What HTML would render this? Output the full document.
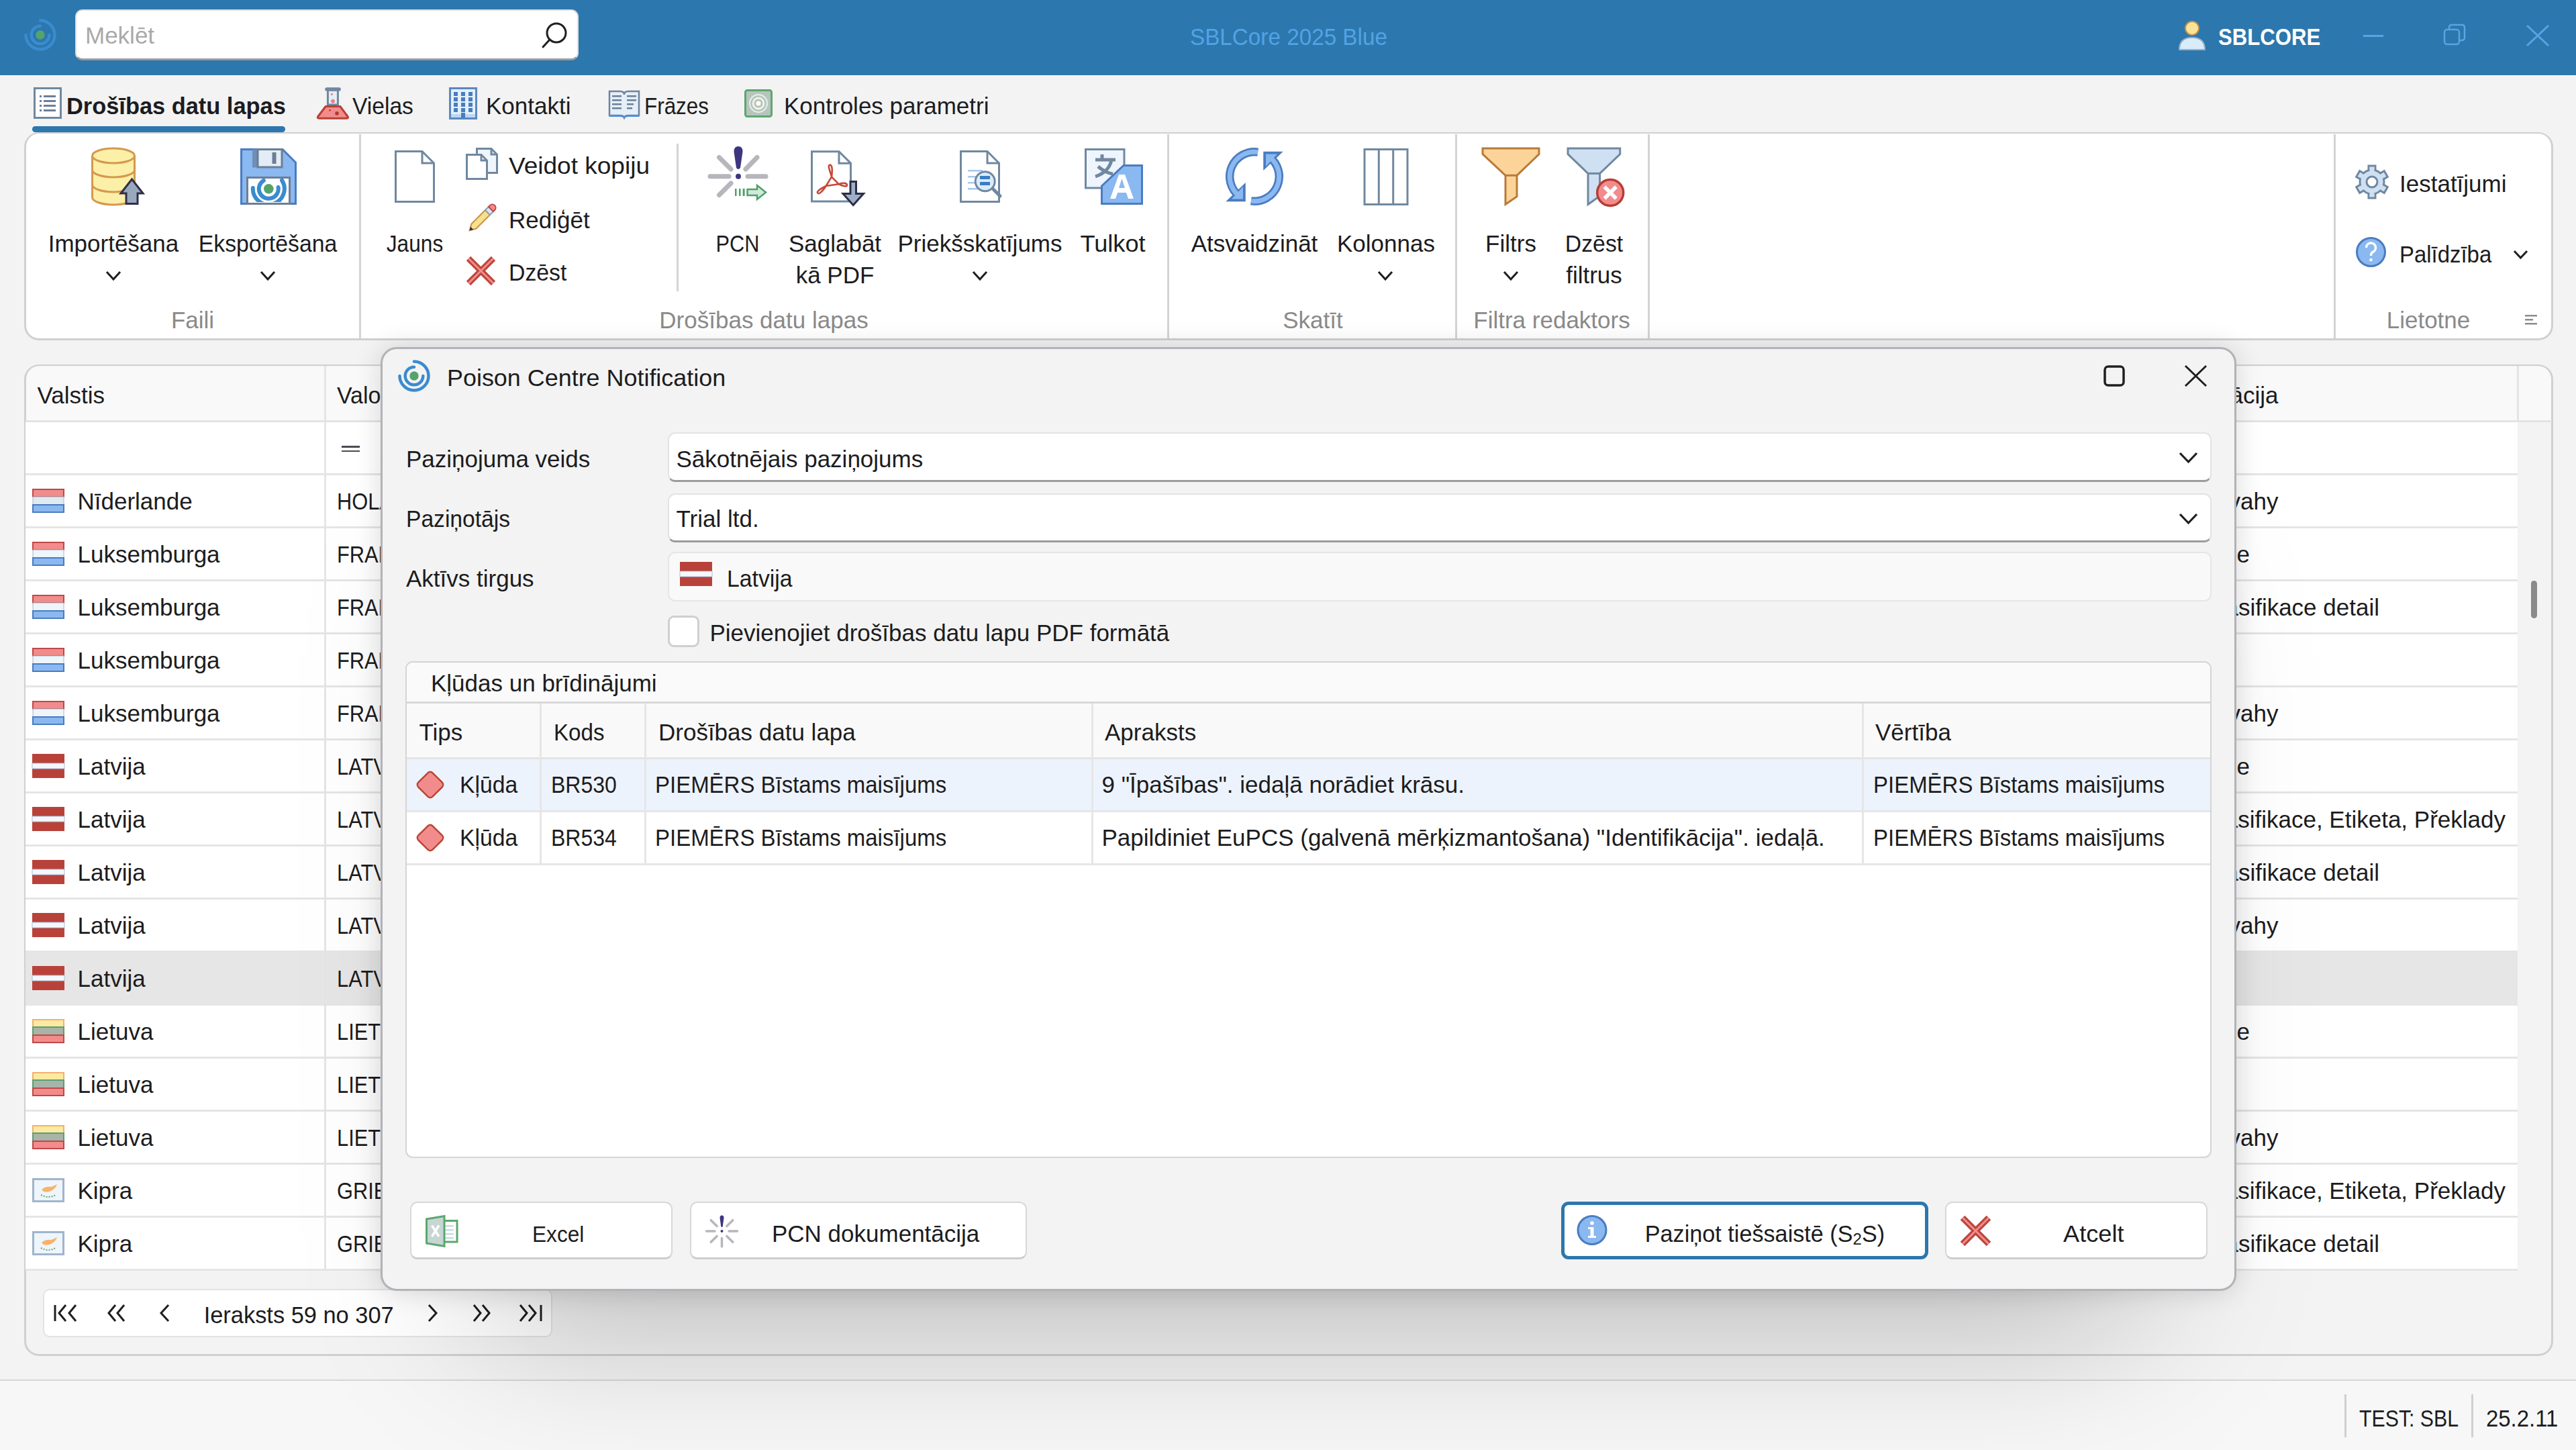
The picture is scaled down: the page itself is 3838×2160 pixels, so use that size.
<!DOCTYPE html>
<html><head><meta charset="utf-8"><style>
html,body{margin:0;padding:0;}
body{width:3838px;height:2160px;position:relative;overflow:hidden;background:#f3f3f3;font-family:"Liberation Sans",sans-serif;color:#1c1c20;}
.a{position:absolute;}
.t{position:absolute;white-space:nowrap;line-height:1;}
svg{overflow:visible}
</style></head><body>
<div class="a" style="left:0px;top:0px;width:3838px;height:112px;background:#2c77ad"></div><svg class="a" style="left:34.0px;top:26.0px" width="52.0" height="52.0" viewBox="0 0 52.0 52.0"><g transform="translate(26.0,26.0)" fill="none" stroke="#3a8bd0" stroke-width="4.5" stroke-linecap="round"><path d="M 0 -21.50 A 21.5 21.5 0 1 1 -21.50 0"/><path d="M 0 -13.30 A 13.3 13.3 0 1 0 13.30 0"/></g><circle cx="26.0" cy="26.0" r="6.7" fill="#55a36c"/></svg><div class="a" style="left:112px;top:14px;width:750px;height:76px;background:#fff;border:2px solid #dedede;border-bottom:3px solid #9c9c9c;border-radius:11px;box-sizing:border-box"></div><div class="t" style="left:127px;top:35.4px;font-size:35px;color:#a9a9a9;">Meklēt</div><svg class="a" style="left:800px;top:30px" width="46" height="46" viewBox="0 0 46 46"><circle cx="29" cy="19" r="14" fill="none" stroke="#1f1f1f" stroke-width="3"/><line x1="19" y1="29" x2="9" y2="40" stroke="#1f1f1f" stroke-width="3" stroke-linecap="round"/></svg><div class="t" style="left:1773px;top:37.4px;font-size:35px;transform:scaleX(0.95);transform-origin:0 0;color:#52a3e5;">SBLCore 2025 Blue</div><svg class="a" style="left:3245px;top:30px" width="42" height="46" viewBox="0 0 42 46"><circle cx="21" cy="12" r="10" fill="#fbe49a" stroke="#c8914a" stroke-width="2"/><path d="M2 44 Q2 26 21 26 Q40 26 40 44 Z" fill="#d8ecfa" stroke="#9ab0c8" stroke-width="2"/></svg><div class="t" style="left:3305px;top:37.4px;font-size:35px;transform:scaleX(0.89);transform-origin:0 0;color:#ffffff;font-weight:700;">SBLCORE</div><div class="a" style="left:3521px;top:52px;width:30px;height:3px;background:#5aa3e4"></div><svg class="a" style="left:3640px;top:35px" width="36" height="36" viewBox="0 0 36 36"><rect x="2" y="9" width="22" height="22" rx="4" fill="none" stroke="#5aa3e4" stroke-width="2.5"/><path d="M9 9 V6 Q9 2 13 2 H28 Q32 2 32 6 V21 Q32 25 28 25 H24" fill="none" stroke="#5aa3e4" stroke-width="2.5"/></svg><svg class="a" style="left:3764px;top:37px" width="34" height="32" viewBox="0 0 34 32"><path d="M1 1 L33 31 M33 1 L1 31" stroke="#5aa3e4" stroke-width="3"/></svg><svg class="a" style="left:50px;top:130px" width="42" height="47" viewBox="0 0 42 47"><rect x="1.5" y="1.5" width="39" height="44" fill="#fff" stroke="#7088a0" stroke-width="3"/><g fill="#6c7f96"><rect x="9" y="12" width="3" height="3"/><rect x="9" y="19" width="3" height="3"/><rect x="9" y="26" width="3" height="3"/><rect x="9" y="33" width="3" height="3"/><rect x="15" y="12" width="18" height="3"/><rect x="15" y="19" width="18" height="3"/><rect x="15" y="26" width="18" height="3"/><rect x="15" y="33" width="18" height="3"/></g></svg><div class="t" style="left:99px;top:140.9px;font-size:34.4px;font-weight:700;">Drošības datu lapas</div><div class="a" style="left:48px;top:188px;width:377px;height:9px;background:#2c77ad;border-radius:5px"></div><svg class="a" style="left:472px;top:130px" width="48" height="48" viewBox="0 0 48 48"><rect x="16.4" y="4" width="15" height="22" fill="#e4eef6" stroke="#7088a0" stroke-width="3"/><rect x="12.2" y="0.3" width="23.6" height="5.5" rx="2.7" fill="#7088a0"/><path d="M13.2 28.5 H34.8 L46 43.5 Q47.5 46.3 44.5 46.3 H3.3 Q0.3 46.3 1.8 43.5 Z" fill="#f28c8c" stroke="#b84035" stroke-width="3" stroke-linejoin="round"/><circle cx="22.4" cy="10.3" r="1.6" fill="#f08080"/><circle cx="24" cy="20.7" r="3" fill="#f08080"/><circle cx="19.5" cy="34.3" r="1.4" fill="#b03a30"/><circle cx="30" cy="38.9" r="2.8" fill="#b03a30"/></svg><div class="t" style="left:525px;top:140.4px;font-size:35px;transform:scaleX(0.96);transform-origin:0 0;">Vielas</div><svg class="a" style="left:669px;top:130px" width="42" height="48" viewBox="0 0 42 48"><rect x="1.5" y="1.5" width="39" height="45" fill="#e3f0fb" stroke="#5a88c0" stroke-width="3"/><g fill="#4a7cc0"><rect x="7" y="7" width="6" height="6"/><rect x="18" y="7" width="6" height="6"/><rect x="29" y="7" width="6" height="6"/><rect x="7" y="15" width="6" height="6"/><rect x="18" y="15" width="6" height="6"/><rect x="29" y="15" width="6" height="6"/><rect x="7" y="23" width="6" height="6"/><rect x="18" y="23" width="6" height="6"/><rect x="29" y="23" width="6" height="6"/><rect x="7" y="31" width="6" height="6"/><rect x="18" y="31" width="6" height="6"/><rect x="29" y="31" width="6" height="6"/><rect x="18" y="38" width="6" height="8"/></g><rect x="3" y="40" width="36" height="5" fill="#a9cdf0" opacity=".7"/><rect x="18" y="38" width="6" height="8" fill="#4a7cc0"/></svg><div class="t" style="left:724px;top:140.4px;font-size:35px;">Kontakti</div><svg class="a" style="left:906px;top:133px" width="48" height="44" viewBox="0 0 48 44"><path d="M2 3 H18 Q24 3 24 8 Q24 3 30 3 H46 V39 H30 Q25 39 24 42 Q23 39 18 39 H2 Z" fill="#e6eff7" stroke="#6e84a0" stroke-width="2.5"/><path d="M2 38 H18 Q23 38 24 42 Q25 38 30 38 H46 V41 H30 Q26 41 24 44 Q22 41 18 41 H2 Z" fill="#4f8fd8"/><g fill="#6c7f96"><rect x="6" y="9" width="14" height="2.5"/><rect x="6" y="15" width="14" height="2.5"/><rect x="6" y="21" width="14" height="2.5"/><rect x="6" y="27" width="14" height="2.5"/><rect x="28" y="9" width="14" height="2.5"/><rect x="28" y="15" width="14" height="2.5"/><rect x="28" y="21" width="10" height="2.5"/><rect x="28" y="27" width="8" height="2.5"/></g></svg><div class="t" style="left:960px;top:140.4px;font-size:35px;transform:scaleX(0.897);transform-origin:0 0;">Frāzes</div><svg class="a" style="left:1109px;top:133px" width="42" height="42" viewBox="0 0 42 42"><rect x="1.5" y="1.5" width="39" height="39" rx="3" fill="#b9c4bc" stroke="#5ba86e" stroke-width="3"/><circle cx="21" cy="21" r="13" fill="none" stroke="#dff3ee" stroke-width="2"/><circle cx="21" cy="21" r="8" fill="none" stroke="#f4f9e8" stroke-width="2.5"/><circle cx="21" cy="21" r="3.5" fill="#fff"/></svg><div class="t" style="left:1168px;top:140.4px;font-size:35px;">Kontroles parametri</div><div class="a" style="left:36px;top:197px;width:3768px;height:310px;background:#fff;border:3px solid #d0d0d0;border-top-width:2.5px;border-radius:22px;box-sizing:border-box"></div><div class="a" style="left:535px;top:200px;width:3px;height:304px;background:#d4d4d4"></div><div class="a" style="left:1739px;top:200px;width:3px;height:304px;background:#d4d4d4"></div><div class="a" style="left:2168px;top:200px;width:3px;height:304px;background:#d4d4d4"></div><div class="a" style="left:2455px;top:200px;width:3px;height:304px;background:#d4d4d4"></div><div class="a" style="left:3477px;top:200px;width:3px;height:304px;background:#d4d4d4"></div><div class="a" style="left:1008px;top:214px;width:3px;height:220px;background:#d4d4d4"></div><div class="t" style="left:-113px;width:800px;text-align:center;top:459.4px;font-size:35px;color:#8a8a8a;">Faili</div><div class="t" style="left:738px;width:800px;text-align:center;top:459.4px;font-size:35px;color:#8a8a8a;">Drošības datu lapas</div><div class="t" style="left:1556px;width:800px;text-align:center;top:459.4px;font-size:35px;color:#8a8a8a;">Skatīt</div><div class="t" style="left:1912px;width:800px;text-align:center;top:459.4px;font-size:35px;color:#8a8a8a;">Filtra redaktors</div><div class="t" style="left:3218px;width:800px;text-align:center;top:459.4px;font-size:35px;color:#8a8a8a;">Lietotne</div><svg class="a" style="left:134px;top:219px" width="82" height="90" viewBox="0 0 82 90"><g transform="translate(2,2)"><path d="M1.5 11 V73 A31.5 11 0 0 0 64.5 73 V11 A31.5 11 0 0 0 1.5 11 Z" fill="#fcefa8" stroke="#d49a4c" stroke-width="3"/><path d="M1.5 11 A31.5 11 0 0 0 64.5 11 M1.5 32 A31.5 11 0 0 0 64.5 32 M1.5 54 A31.5 11 0 0 0 64.5 54" fill="none" stroke="#d49a4c" stroke-width="3"/><path d="M52 82.5 V67 H44 L60.5 46 L77 67 H69 V82.5 Z" fill="#9aa8bc" stroke="#2f2f4a" stroke-width="3"/></g></svg><div class="t" style="left:-231px;width:800px;text-align:center;top:345.4px;font-size:35px;">Importēšana</div><svg class="a" style="left:157.0px;top:403.0px" width="24" height="15" viewBox="0 0 24 15"><path d="M2 2 L12.0 13 L22 2" fill="none" stroke="#1f1f1f" stroke-width="3"/></svg><svg class="a" style="left:356px;top:219px" width="88" height="88" viewBox="0 0 88 88"><g transform="translate(2,2)"><path d="M1.5 1.5 H63 L82.5 21 V82.5 H1.5 Z" fill="#8ab8f0" stroke="#4a7cc0" stroke-width="3"/><rect x="18" y="1.5" width="9" height="27" fill="#6f8fb8"/><rect x="26" y="1.5" width="36" height="26.5" fill="#e3edf5" stroke="#6c7f96" stroke-width="3"/><rect x="47.5" y="6" width="6" height="17" fill="#6c7f96"/><rect x="10.5" y="43.5" width="63" height="39" fill="#fff" stroke="#6c7f96" stroke-width="3"/><clipPath id="fl"><rect x="12" y="45" width="60" height="35"/></clipPath><g clip-path="url(#fl)" fill="none" stroke="#3a8bd0" stroke-width="6" stroke-linecap="round"><path d="M34.8 47.9 A14.5 14.5 0 1 0 56.6 58.0"/><path d="M18.8 59.1 A23.5 23.5 0 1 0 62.0 47.5"/></g><circle cx="42.3" cy="60.3" r="7.3" fill="#55a36c"/></g></svg><div class="t" style="left:-1px;width:800px;text-align:center;top:345.4px;font-size:35px;transform:scaleX(0.965);transform-origin:50% 0;">Eksportēšana</div><svg class="a" style="left:387.0px;top:403.0px" width="24" height="15" viewBox="0 0 24 15"><path d="M2 2 L12.0 13 L22 2" fill="none" stroke="#1f1f1f" stroke-width="3"/></svg><svg class="a" style="left:588px;top:224px" width="60" height="78" viewBox="0 0 60 78"><path d="M1.5 1.5 H41 L58.5 19 V76.5 H1.5 Z" fill="#fff" stroke="#7088a0" stroke-width="3"/><path d="M41 1.5 V19 H58.5" fill="none" stroke="#7088a0" stroke-width="3"/></svg><div class="t" style="left:218px;width:800px;text-align:center;top:345.4px;font-size:35px;transform:scaleX(0.904);transform-origin:50% 0;">Jauns</div><svg class="a" style="left:693px;top:219px" width="50" height="50" viewBox="0 0 50 50"><path d="M17.5 2.5 H39 L47.5 11 V38.5 H17.5 Z" fill="#eef5fb" stroke="#7088a0" stroke-width="3"/><path d="M39 2.5 V11 H47.5" fill="none" stroke="#7088a0" stroke-width="3"/><path d="M2.5 11.5 H24 L32.5 20 V47.5 H2.5 Z" fill="#fff" stroke="#7088a0" stroke-width="3"/><path d="M24 11.5 V20 H32.5" fill="none" stroke="#7088a0" stroke-width="3"/></svg><div class="t" style="left:758px;top:229.1px;font-size:35px;transform:scaleX(1.058);transform-origin:0 0;">Veidot kopiju</div><svg class="a" style="left:694px;top:301px" width="48" height="48" viewBox="0 0 48 48"><g transform="translate(24,24) rotate(-45)"><path d="M-26 0 L-17 -5 H12 V5 H-17 Z" fill="#f8e08c" stroke="#c8944a" stroke-width="2"/><path d="M-26 0 L-21 -3 V3 Z" fill="#2d2d48"/><rect x="12" y="-5" width="7" height="10" fill="#dce8f4" stroke="#8aa0b8" stroke-width="2"/><path d="M19 -5 H22 A5 5 0 0 1 22 5 H19 Z" fill="#f28c8c" stroke="#c04848" stroke-width="2"/></g></svg><div class="t" style="left:758px;top:309.8px;font-size:35px;">Rediģēt</div><svg class="a" style="left:694px;top:381px" width="45" height="45" viewBox="0 0 45 45"><path d="M4 4 L41 41 M41 4 L4 41" stroke="#c0463c" stroke-width="9.0"/><path d="M4 4 L41 41 M41 4 L4 41" stroke="#f09090" stroke-width="2.7"/></svg><div class="t" style="left:758px;top:388.4px;font-size:35px;transform:scaleX(0.965);transform-origin:0 0;">Dzēst</div><svg class="a" style="left:1050px;top:215px" width="100.0" height="90.0" viewBox="0 0 100.0 90.0"><g transform="scale(1.0)"><g stroke="#b6b6bc" stroke-width="7" stroke-linecap="round"><line x1="8" y1="47.7" x2="36" y2="47.7"/><line x1="64" y1="47.7" x2="91" y2="47.7"/><line x1="21.5" y1="19.5" x2="39" y2="37"/><line x1="78" y1="19.5" x2="61" y2="37"/><line x1="39" y1="58" x2="21.5" y2="75.5"/></g><path d="M43.5 11 Q43.5 3 50 3 Q56.5 3 56.5 11 L53 35 Q50 39 47 35 Z" fill="#3d3580"/><circle cx="50" cy="47.7" r="4" fill="#3d3580"/><g fill="#4fa06a"><rect x="45" y="66" width="2.5" height="11"/><rect x="51" y="66" width="2.5" height="11"/><rect x="56.6" y="66" width="3" height="11"/></g><path d="M63.5 67 H78 V61 L91 71.5 L78 82 V76 H63.5 Z" fill="#cfeadb" stroke="#4fa06a" stroke-width="2.5"/></g></svg><div class="t" style="left:699px;width:800px;text-align:center;top:345.4px;font-size:35px;transform:scaleX(0.877);transform-origin:50% 0;">PCN</div><svg class="a" style="left:1205px;top:220px" width="90" height="90" viewBox="0 0 90 90"><path d="M4.5 5.7 H45 L62.5 23.2 V79.9 H4.5 Z" fill="#fff" stroke="#7088a0" stroke-width="3"/><path d="M45 5.7 V23.2 H62.5" fill="none" stroke="#7088a0" stroke-width="3"/><path d="M34 43.3 C33 38 27.5 27 31 25.7 C35 25 35.5 33 34 43.3 L44.7 54.3 C50 57 57.5 59 57 55.5 C56.5 52 50 52.5 44.7 54.3 L25.7 57 C20 60 12 64 13 67 C14 70.5 20 66 25.7 57 Z" fill="none" stroke="#c84838" stroke-width="2.6" stroke-linejoin="round"/><path d="M62 50.5 H70.5 V68.5 H81.5 L66.2 85.5 L51 68.5 H62 Z" fill="#9eb0c8" stroke="#2d2d48" stroke-width="3"/></svg><div class="t" style="left:844px;width:800px;text-align:center;top:345.4px;font-size:35px;">Saglabāt</div><div class="t" style="left:844px;width:800px;text-align:center;top:392.2px;font-size:35px;">kā PDF</div><svg class="a" style="left:1428px;top:222px" width="70" height="80" viewBox="0 0 70 80"><path d="M3.5 3.5 H43 L60.5 21 V78.5 H3.5 Z" fill="#fff" stroke="#7088a0" stroke-width="3"/><path d="M43 3.5 V21 H60.5" fill="none" stroke="#7088a0" stroke-width="3"/><g fill="#a6c8f0"><rect x="14" y="31" width="22" height="2.5"/><rect x="14" y="40" width="14" height="2.5"/><rect x="14" y="49" width="14" height="2.5"/><rect x="14" y="58" width="20" height="2.5"/></g><line x1="50" y1="58" x2="62" y2="70" stroke="#7088a0" stroke-width="5" stroke-linecap="round"/><circle cx="39.7" cy="48.2" r="14.5" fill="#dcecf8" stroke="#7088a0" stroke-width="3"/><rect x="32" y="40" width="15" height="5" fill="#3a7cc8"/><rect x="32" y="49" width="15" height="5" fill="#3a7cc8"/></svg><div class="t" style="left:1060px;width:800px;text-align:center;top:345.4px;font-size:35px;">Priekšskatījums</div><svg class="a" style="left:1448.0px;top:403.0px" width="24" height="15" viewBox="0 0 24 15"><path d="M2 2 L12.0 13 L22 2" fill="none" stroke="#1f1f1f" stroke-width="3"/></svg><svg class="a" style="left:1614px;top:219px" width="90" height="90" viewBox="0 0 90 90"><g transform="translate(2,2)"><rect x="1.5" y="1.5" width="57.5" height="57.5" fill="#eef5fc" stroke="#7088a0" stroke-width="3"/><g fill="none" stroke="#7088a0" stroke-width="5"><line x1="26" y1="9" x2="26" y2="17"/><line x1="16" y1="17" x2="46" y2="17"/><path d="M40 18 C37 30 28 38 16 42"/><path d="M20 27 C26 32 34 37 42 38"/></g><path d="M25.5 56 L58 25.5 H85.5 V82.5 H25.5 Z" fill="#8ab8f0" stroke="#4a7cc0" stroke-width="3"/><path d="M38 75 L51 39 H60 L73 75 H65 L62 66 H49 L46 75 Z M51 59 H60 L55.5 45 Z" fill="#fff"/></g></svg><div class="t" style="left:1258px;width:800px;text-align:center;top:345.4px;font-size:35px;transform:scaleX(1.034);transform-origin:50% 0;">Tulkot</div><svg class="a" style="left:1825px;top:219px" width="90" height="90" viewBox="0 0 90 90"><g transform="translate(2,2)"><path d="M47.1 5.6 A36.75 36.75 0 0 0 19.4 71.0 M36.9 78.4 A36.75 36.75 0 0 0 64.6 13.0" fill="none" stroke="#4a7cc0" stroke-width="12.5"/><path d="M27.5 54 L27.5 78 L2.5 78 Z M56.5 30 L56.5 6 L81.5 6 Z" fill="#4a7cc0" stroke="#4a7cc0" stroke-width="2.5" stroke-linejoin="miter"/><path d="M47.1 5.6 A36.75 36.75 0 0 0 19.4 71.0 M36.9 78.4 A36.75 36.75 0 0 0 64.6 13.0" fill="none" stroke="#8ab8f0" stroke-width="7"/><path d="M25 57 L25 75.5 L8 75.5 Z M59 27 L59 8.5 L76 8.5 Z" fill="#8ab8f0"/></g></svg><div class="t" style="left:1469px;width:800px;text-align:center;top:345.4px;font-size:35px;">Atsvaidzināt</div><svg class="a" style="left:2030px;top:219px" width="70" height="88" viewBox="0 0 70 88"><g fill="#fff" stroke="#7088a0" stroke-width="3"><rect x="3" y="3.5" width="64" height="82"/><line x1="24.3" y1="3.5" x2="24.3" y2="85.5"/><line x1="45.7" y1="3.5" x2="45.7" y2="85.5"/></g></svg><div class="t" style="left:1665px;width:800px;text-align:center;top:345.4px;font-size:35px;">Kolonnas</div><svg class="a" style="left:2052.0px;top:403.0px" width="24" height="15" viewBox="0 0 24 15"><path d="M2 2 L12.0 13 L22 2" fill="none" stroke="#1f1f1f" stroke-width="3"/></svg><svg class="a" style="left:2205px;top:217px" width="92" height="92" viewBox="0 0 92 92"><path d="M4 4 H88 V12.7 L55 44.3 V75.8 L38 87.5 V44.3 L4 12.7 Z" fill="#fcd49a" stroke="#b87a38" stroke-width="3"/><line x1="38" y1="44.3" x2="55" y2="44.3" stroke="#b87a38" stroke-width="3"/></svg><div class="t" style="left:1851px;width:800px;text-align:center;top:345.4px;font-size:35px;">Filtrs</div><svg class="a" style="left:2239.0px;top:403.0px" width="24" height="15" viewBox="0 0 24 15"><path d="M2 2 L12.0 13 L22 2" fill="none" stroke="#1f1f1f" stroke-width="3"/></svg><svg class="a" style="left:2332px;top:217px" width="92" height="92" viewBox="0 0 92 92"><path d="M4 4 H81.7 V12.7 L51.6 41.4 V75 L34 87.5 V41.4 L4 12.7 Z" fill="#cfe0f2" stroke="#7088a0" stroke-width="3"/><line x1="34" y1="41.4" x2="51.6" y2="41.4" stroke="#7088a0" stroke-width="3"/><circle cx="67.2" cy="70" r="19.5" fill="#f28c8c" stroke="#b83c35" stroke-width="3.5"/><path d="M58.5 61.3 L75.9 78.7 M75.9 61.3 L58.5 78.7" stroke="#fff" stroke-width="5.5"/></svg><div class="t" style="left:1975px;width:800px;text-align:center;top:345.4px;font-size:35px;transform:scaleX(0.965);transform-origin:50% 0;">Dzēst</div><div class="t" style="left:1975px;width:800px;text-align:center;top:392.2px;font-size:35px;">filtrus</div><svg class="a" style="left:3508px;top:246px" width="52" height="52" viewBox="0 0 52 52"><g transform="translate(26,25)"><path d=""/><rect x="-5" y="-24" width="10" height="10" fill="#cfe0f2" stroke="#7088a0" stroke-width="3" transform="rotate(0)"/><rect x="-5" y="-24" width="10" height="10" fill="#cfe0f2" stroke="#7088a0" stroke-width="3" transform="rotate(60)"/><rect x="-5" y="-24" width="10" height="10" fill="#cfe0f2" stroke="#7088a0" stroke-width="3" transform="rotate(120)"/><rect x="-5" y="-24" width="10" height="10" fill="#cfe0f2" stroke="#7088a0" stroke-width="3" transform="rotate(180)"/><rect x="-5" y="-24" width="10" height="10" fill="#cfe0f2" stroke="#7088a0" stroke-width="3" transform="rotate(240)"/><rect x="-5" y="-24" width="10" height="10" fill="#cfe0f2" stroke="#7088a0" stroke-width="3" transform="rotate(300)"/><circle r="18" fill="#cfe0f2" stroke="#7088a0" stroke-width="3"/><rect x="-3.5" y="-22" width="7" height="8" fill="#cfe0f2" transform="rotate(0)"/><rect x="-3.5" y="-22" width="7" height="8" fill="#cfe0f2" transform="rotate(60)"/><rect x="-3.5" y="-22" width="7" height="8" fill="#cfe0f2" transform="rotate(120)"/><rect x="-3.5" y="-22" width="7" height="8" fill="#cfe0f2" transform="rotate(180)"/><rect x="-3.5" y="-22" width="7" height="8" fill="#cfe0f2" transform="rotate(240)"/><rect x="-3.5" y="-22" width="7" height="8" fill="#cfe0f2" transform="rotate(300)"/><circle r="8" fill="#fff" stroke="#7088a0" stroke-width="3"/></g></svg><div class="t" style="left:3575px;top:255.9px;font-size:35px;">Iestatījumi</div><svg class="a" style="left:3508px;top:351px" width="50" height="50" viewBox="0 0 50 50"><circle cx="24.5" cy="24.5" r="21" fill="#8ab8f0" stroke="#4a7cc0" stroke-width="3"/><path d="M17.5 18 A7 7 0 1 1 27 24.5 Q24.5 26 24.5 30" fill="none" stroke="#fff" stroke-width="3.5"/><circle cx="24.5" cy="36" r="2.3" fill="#fff"/></svg><div class="t" style="left:3575px;top:361.4px;font-size:35px;transform:scaleX(0.94);transform-origin:0 0;">Palīdzība</div><svg class="a" style="left:3743.5px;top:372.0px" width="23" height="14" viewBox="0 0 23 14"><path d="M2 2 L11.5 12 L21 2" fill="none" stroke="#1f1f1f" stroke-width="3"/></svg><svg class="a" style="left:3762px;top:469px" width="20" height="17" viewBox="0 0 20 17"><g fill="#8c8c8c"><rect x="0" y="0" width="18" height="2.5"/><rect x="0" y="6" width="12" height="2.5"/><rect x="0" y="12" width="18" height="2.5"/></g></svg><div class="a" style="left:36px;top:543px;width:3768px;height:1477px;background:#f3f3f3;border:3px solid #d0d0d0;border-top-width:2.5px;border-radius:22px;box-sizing:border-box;overflow:hidden"></div><div class="a" style="left:39px;top:545.5px;width:3762px;height:82px;background:#f9f9f9;border-radius:20px 20px 0 0"></div><div class="a" style="left:38px;top:626px;width:3713px;height:3px;background:#e3e3e3"></div><div class="a" style="left:3751px;top:626px;width:51px;height:3px;background:#e3e3e3"></div><div class="a" style="left:3750px;top:545px;width:3px;height:81px;background:#e3e3e3"></div><div class="t" style="left:55.5px;top:571.4px;font-size:35px;">Valstis</div><div class="t" style="left:502px;top:571.4px;font-size:35px;transform:scaleX(0.97);transform-origin:0 0;">Valoda</div><div class="t" style="left:2194.5px;width:1200px;text-align:right;top:571.4px;font-size:35px;">Dokumentācija</div><div class="a" style="left:38px;top:629px;width:3713px;height:76px;background:#fff"></div><div class="a" style="left:509px;top:664px;width:27px;height:2.5px;background:#4a4a55"></div><div class="a" style="left:509px;top:670.5px;width:27px;height:2.5px;background:#4a4a55"></div><div class="a" style="left:38px;top:705px;width:3713px;height:3px;background:#e5e5e5"></div><div class="a" style="left:38px;top:784px;width:3713px;height:3px;background:#e5e5e5"></div><div class="a" style="left:38px;top:863px;width:3713px;height:3px;background:#e5e5e5"></div><div class="a" style="left:38px;top:942px;width:3713px;height:3px;background:#e5e5e5"></div><div class="a" style="left:38px;top:1021px;width:3713px;height:3px;background:#e5e5e5"></div><div class="a" style="left:38px;top:1100px;width:3713px;height:3px;background:#e5e5e5"></div><div class="a" style="left:38px;top:1179px;width:3713px;height:3px;background:#e5e5e5"></div><div class="a" style="left:38px;top:1258px;width:3713px;height:3px;background:#e5e5e5"></div><div class="a" style="left:38px;top:1337px;width:3713px;height:3px;background:#e5e5e5"></div><div class="a" style="left:38px;top:1416px;width:3713px;height:3px;background:#e5e5e5"></div><div class="a" style="left:38px;top:1495px;width:3713px;height:3px;background:#e5e5e5"></div><div class="a" style="left:38px;top:1574px;width:3713px;height:3px;background:#e5e5e5"></div><div class="a" style="left:38px;top:1653px;width:3713px;height:3px;background:#e5e5e5"></div><div class="a" style="left:38px;top:1732px;width:3713px;height:3px;background:#e5e5e5"></div><div class="a" style="left:38px;top:1811px;width:3713px;height:3px;background:#e5e5e5"></div><div class="a" style="left:38px;top:1890px;width:3713px;height:3px;background:#e5e5e5"></div><div class="a" style="left:38px;top:708px;width:3713px;height:76px;background:#fff"></div><svg class="a" style="left:48px;top:728px" width="48" height="36" viewBox="0 0 48 36"><rect x="1" y="1" width="46" height="11" fill="#f28c8c" stroke="#c04848" stroke-width="2"/><rect x="1" y="12" width="46" height="12" fill="#dfeaf2" stroke="#a8b8c8" stroke-width="1"/><rect x="1" y="24" width="46" height="11" fill="#8ab8f0" stroke="#4a7cc0" stroke-width="2"/></svg><div class="t" style="left:115.5px;top:729.4px;font-size:35px;">Nīderlande</div><div class="t" style="left:502px;top:729.4px;font-size:35px;transform:scaleX(0.88);transform-origin:0 0;">HOLANDIEŠU</div><div class="t" style="left:2194.5px;width:1200px;text-align:right;top:729.4px;font-size:35px;">Úvahy</div><div class="a" style="left:38px;top:787px;width:3713px;height:76px;background:#fff"></div><svg class="a" style="left:48px;top:807px" width="48" height="36" viewBox="0 0 48 36"><rect x="1" y="1" width="46" height="11" fill="#f28c8c" stroke="#c04848" stroke-width="2"/><rect x="1" y="12" width="46" height="12" fill="#eef5fb" stroke="#a8b8c8" stroke-width="1"/><rect x="1" y="24" width="46" height="11" fill="#8ab8f0" stroke="#4a7cc0" stroke-width="2"/></svg><div class="t" style="left:115.5px;top:808.4px;font-size:35px;">Luksemburga</div><div class="t" style="left:502px;top:808.4px;font-size:35px;transform:scaleX(0.88);transform-origin:0 0;">FRANČU</div><div class="t" style="left:2152px;width:1200px;text-align:right;top:808.4px;font-size:35px;">Verze</div><div class="a" style="left:38px;top:866px;width:3713px;height:76px;background:#fff"></div><svg class="a" style="left:48px;top:886px" width="48" height="36" viewBox="0 0 48 36"><rect x="1" y="1" width="46" height="11" fill="#f28c8c" stroke="#c04848" stroke-width="2"/><rect x="1" y="12" width="46" height="12" fill="#eef5fb" stroke="#a8b8c8" stroke-width="1"/><rect x="1" y="24" width="46" height="11" fill="#8ab8f0" stroke="#4a7cc0" stroke-width="2"/></svg><div class="t" style="left:115.5px;top:887.4px;font-size:35px;">Luksemburga</div><div class="t" style="left:502px;top:887.4px;font-size:35px;transform:scaleX(0.88);transform-origin:0 0;">FRANČU</div><div class="t" style="left:2345px;width:1200px;text-align:right;top:887.4px;font-size:35px;">Klasifikace detail</div><div class="a" style="left:38px;top:945px;width:3713px;height:76px;background:#fff"></div><svg class="a" style="left:48px;top:965px" width="48" height="36" viewBox="0 0 48 36"><rect x="1" y="1" width="46" height="11" fill="#f28c8c" stroke="#c04848" stroke-width="2"/><rect x="1" y="12" width="46" height="12" fill="#eef5fb" stroke="#a8b8c8" stroke-width="1"/><rect x="1" y="24" width="46" height="11" fill="#8ab8f0" stroke="#4a7cc0" stroke-width="2"/></svg><div class="t" style="left:115.5px;top:966.4px;font-size:35px;">Luksemburga</div><div class="t" style="left:502px;top:966.4px;font-size:35px;transform:scaleX(0.88);transform-origin:0 0;">FRANČU</div><div class="a" style="left:38px;top:1024px;width:3713px;height:76px;background:#fff"></div><svg class="a" style="left:48px;top:1044px" width="48" height="36" viewBox="0 0 48 36"><rect x="1" y="1" width="46" height="11" fill="#f28c8c" stroke="#c04848" stroke-width="2"/><rect x="1" y="12" width="46" height="12" fill="#eef5fb" stroke="#a8b8c8" stroke-width="1"/><rect x="1" y="24" width="46" height="11" fill="#8ab8f0" stroke="#4a7cc0" stroke-width="2"/></svg><div class="t" style="left:115.5px;top:1045.4px;font-size:35px;">Luksemburga</div><div class="t" style="left:502px;top:1045.4px;font-size:35px;transform:scaleX(0.88);transform-origin:0 0;">FRANČU</div><div class="t" style="left:2194.5px;width:1200px;text-align:right;top:1045.4px;font-size:35px;">Úvahy</div><div class="a" style="left:38px;top:1103px;width:3713px;height:76px;background:#fff"></div><svg class="a" style="left:48px;top:1123px" width="48" height="36" viewBox="0 0 48 36"><rect x="0" y="0" width="48" height="36" fill="#b8423a"/><rect x="0" y="14" width="48" height="8" fill="#f4f8fc" stroke="#a8c0dc" stroke-width="1"/></svg><div class="t" style="left:115.5px;top:1124.4px;font-size:35px;">Latvija</div><div class="t" style="left:502px;top:1124.4px;font-size:35px;transform:scaleX(0.88);transform-origin:0 0;">LATVIEŠU</div><div class="t" style="left:2152px;width:1200px;text-align:right;top:1124.4px;font-size:35px;">Verze</div><div class="a" style="left:38px;top:1182px;width:3713px;height:76px;background:#fff"></div><svg class="a" style="left:48px;top:1202px" width="48" height="36" viewBox="0 0 48 36"><rect x="0" y="0" width="48" height="36" fill="#b8423a"/><rect x="0" y="14" width="48" height="8" fill="#f4f8fc" stroke="#a8c0dc" stroke-width="1"/></svg><div class="t" style="left:115.5px;top:1203.4px;font-size:35px;">Latvija</div><div class="t" style="left:502px;top:1203.4px;font-size:35px;transform:scaleX(0.88);transform-origin:0 0;">LATVIEŠU</div><div class="t" style="left:2533px;width:1200px;text-align:right;top:1203.4px;font-size:35px;">Klasifikace, Etiketa, Překlady</div><div class="a" style="left:38px;top:1261px;width:3713px;height:76px;background:#fff"></div><svg class="a" style="left:48px;top:1281px" width="48" height="36" viewBox="0 0 48 36"><rect x="0" y="0" width="48" height="36" fill="#b8423a"/><rect x="0" y="14" width="48" height="8" fill="#f4f8fc" stroke="#a8c0dc" stroke-width="1"/></svg><div class="t" style="left:115.5px;top:1282.4px;font-size:35px;">Latvija</div><div class="t" style="left:502px;top:1282.4px;font-size:35px;transform:scaleX(0.88);transform-origin:0 0;">LATVIEŠU</div><div class="t" style="left:2345px;width:1200px;text-align:right;top:1282.4px;font-size:35px;">Klasifikace detail</div><div class="a" style="left:38px;top:1340px;width:3713px;height:76px;background:#fff"></div><svg class="a" style="left:48px;top:1360px" width="48" height="36" viewBox="0 0 48 36"><rect x="0" y="0" width="48" height="36" fill="#b8423a"/><rect x="0" y="14" width="48" height="8" fill="#f4f8fc" stroke="#a8c0dc" stroke-width="1"/></svg><div class="t" style="left:115.5px;top:1361.4px;font-size:35px;">Latvija</div><div class="t" style="left:502px;top:1361.4px;font-size:35px;transform:scaleX(0.88);transform-origin:0 0;">LATVIEŠU</div><div class="t" style="left:2194.5px;width:1200px;text-align:right;top:1361.4px;font-size:35px;">Úvahy</div><div class="a" style="left:38px;top:1419px;width:3713px;height:76px;background:#e6e6e6"></div><svg class="a" style="left:48px;top:1439px" width="48" height="36" viewBox="0 0 48 36"><rect x="0" y="0" width="48" height="36" fill="#b8423a"/><rect x="0" y="14" width="48" height="8" fill="#f4f8fc" stroke="#a8c0dc" stroke-width="1"/></svg><div class="t" style="left:115.5px;top:1440.4px;font-size:35px;">Latvija</div><div class="t" style="left:502px;top:1440.4px;font-size:35px;transform:scaleX(0.88);transform-origin:0 0;">LATVIEŠU</div><div class="a" style="left:38px;top:1498px;width:3713px;height:76px;background:#fff"></div><svg class="a" style="left:48px;top:1518px" width="48" height="36" viewBox="0 0 48 36"><rect x="1" y="1" width="46" height="11" fill="#fde9a0" stroke="#f0b070" stroke-width="2"/><rect x="1" y="12" width="46" height="12" fill="#a8b4a8" stroke="#5aa070" stroke-width="2"/><rect x="1" y="24" width="46" height="11" fill="#f28c8c" stroke="#c04848" stroke-width="2"/></svg><div class="t" style="left:115.5px;top:1519.4px;font-size:35px;">Lietuva</div><div class="t" style="left:502px;top:1519.4px;font-size:35px;transform:scaleX(0.88);transform-origin:0 0;">LIETUVIEŠU</div><div class="t" style="left:2152px;width:1200px;text-align:right;top:1519.4px;font-size:35px;">Verze</div><div class="a" style="left:38px;top:1577px;width:3713px;height:76px;background:#fff"></div><svg class="a" style="left:48px;top:1597px" width="48" height="36" viewBox="0 0 48 36"><rect x="1" y="1" width="46" height="11" fill="#fde9a0" stroke="#f0b070" stroke-width="2"/><rect x="1" y="12" width="46" height="12" fill="#a8b4a8" stroke="#5aa070" stroke-width="2"/><rect x="1" y="24" width="46" height="11" fill="#f28c8c" stroke="#c04848" stroke-width="2"/></svg><div class="t" style="left:115.5px;top:1598.4px;font-size:35px;">Lietuva</div><div class="t" style="left:502px;top:1598.4px;font-size:35px;transform:scaleX(0.88);transform-origin:0 0;">LIETUVIEŠU</div><div class="a" style="left:38px;top:1656px;width:3713px;height:76px;background:#fff"></div><svg class="a" style="left:48px;top:1676px" width="48" height="36" viewBox="0 0 48 36"><rect x="1" y="1" width="46" height="11" fill="#fde9a0" stroke="#f0b070" stroke-width="2"/><rect x="1" y="12" width="46" height="12" fill="#a8b4a8" stroke="#5aa070" stroke-width="2"/><rect x="1" y="24" width="46" height="11" fill="#f28c8c" stroke="#c04848" stroke-width="2"/></svg><div class="t" style="left:115.5px;top:1677.4px;font-size:35px;">Lietuva</div><div class="t" style="left:502px;top:1677.4px;font-size:35px;transform:scaleX(0.88);transform-origin:0 0;">LIETUVIEŠU</div><div class="t" style="left:2194.5px;width:1200px;text-align:right;top:1677.4px;font-size:35px;">Úvahy</div><div class="a" style="left:38px;top:1735px;width:3713px;height:76px;background:#fff"></div><svg class="a" style="left:48px;top:1755px" width="48" height="36" viewBox="0 0 48 36"><rect x="1.5" y="1.5" width="45" height="33" fill="#eef5fb" stroke="#a0b4cc" stroke-width="3"/><path d="M14 17 Q20 12 28 13 Q34 11 37 9 Q35 15 30 18 Q24 22 17 20 Z" fill="#f5b46a"/><path d="M13 25 Q24 31 35 25" fill="none" stroke="#6aa878" stroke-width="2" stroke-dasharray="2 2"/></svg><div class="t" style="left:115.5px;top:1756.4px;font-size:35px;">Kipra</div><div class="t" style="left:502px;top:1756.4px;font-size:35px;transform:scaleX(0.88);transform-origin:0 0;">GRIEĶU</div><div class="t" style="left:2533px;width:1200px;text-align:right;top:1756.4px;font-size:35px;">Klasifikace, Etiketa, Překlady</div><div class="a" style="left:38px;top:1814px;width:3713px;height:76px;background:#fff"></div><svg class="a" style="left:48px;top:1834px" width="48" height="36" viewBox="0 0 48 36"><rect x="1.5" y="1.5" width="45" height="33" fill="#eef5fb" stroke="#a0b4cc" stroke-width="3"/><path d="M14 17 Q20 12 28 13 Q34 11 37 9 Q35 15 30 18 Q24 22 17 20 Z" fill="#f5b46a"/><path d="M13 25 Q24 31 35 25" fill="none" stroke="#6aa878" stroke-width="2" stroke-dasharray="2 2"/></svg><div class="t" style="left:115.5px;top:1835.4px;font-size:35px;">Kipra</div><div class="t" style="left:502px;top:1835.4px;font-size:35px;transform:scaleX(0.88);transform-origin:0 0;">GRIEĶU</div><div class="t" style="left:2345px;width:1200px;text-align:right;top:1835.4px;font-size:35px;">Klasifikace detail</div><div class="a" style="left:483px;top:545px;width:3px;height:1348px;background:#e5e5e5"></div><div class="a" style="left:3771px;top:865px;width:9px;height:56px;background:#8a8a8a;border-radius:5px"></div><div class="a" style="left:64px;top:1920px;width:759px;height:72px;background:#fff;border:2px solid #e3e3e3;border-radius:10px;box-sizing:border-box"></div><div class="t" style="left:303.7px;top:1941.6px;font-size:34.4px;">Ieraksts 59 no 307</div><svg class="a" style="left:80px;top:1941px" width="38" height="30" viewBox="0 0 38 30"><g fill="none" stroke="#1f1f1f" stroke-width="3"><line x1="2" y1="3" x2="2" y2="27"/><path d="M18 3 L8 15 L18 27 M33 3 L23 15 L33 27"/></g></svg><svg class="a" style="left:158px;top:1941px" width="30" height="30" viewBox="0 0 30 30"><g fill="none" stroke="#1f1f1f" stroke-width="3"><path d="M14 3 L4 15 L14 27 M27 3 L17 15 L27 27"/></g></svg><svg class="a" style="left:236px;top:1941px" width="20" height="30" viewBox="0 0 20 30"><g fill="none" stroke="#1f1f1f" stroke-width="3"><path d="M15 3 L4 15 L15 27"/></g></svg><svg class="a" style="left:636px;top:1941px" width="20" height="30" viewBox="0 0 20 30"><g fill="none" stroke="#1f1f1f" stroke-width="3"><path d="M3 3 L14 15 L3 27"/></g></svg><svg class="a" style="left:703px;top:1941px" width="30" height="30" viewBox="0 0 30 30"><g fill="none" stroke="#1f1f1f" stroke-width="3"><path d="M3 3 L13 15 L3 27 M16 3 L26 15 L16 27"/></g></svg><svg class="a" style="left:772px;top:1941px" width="38" height="30" viewBox="0 0 38 30"><g fill="none" stroke="#1f1f1f" stroke-width="3"><path d="M3 3 L13 15 L3 27 M16 3 L26 15 L16 27"/><line x1="34" y1="3" x2="34" y2="27"/></g></svg><div class="a" style="left:0px;top:2055px;width:3838px;height:2px;background:#d6d6d6"></div><div class="a" style="left:0px;top:2057px;width:3838px;height:103px;background:#f7f7f7"></div><div class="a" style="left:3493px;top:2077px;width:3px;height:64px;background:#d0d0d0"></div><div class="a" style="left:3682px;top:2077px;width:3px;height:64px;background:#d0d0d0"></div><div class="t" style="left:3515px;top:2094.9px;font-size:35px;transform:scaleX(0.865);transform-origin:0 0;">TEST: SBL</div><div class="t" style="left:3703.6px;top:2094.9px;font-size:35px;transform:scaleX(0.94);transform-origin:0 0;">25.2.11</div><div class="a" style="left:567px;top:517px;width:2765px;height:1406px;background:#f3f3f3;border:3px solid #b2b2b8;border-radius:24px;box-sizing:border-box;box-shadow:0 190px 240px -150px rgba(0,0,0,0.26),0 0 40px rgba(0,0,0,0.14)"></div><svg class="a" style="left:591.0px;top:534.0px" width="52.0" height="52.0" viewBox="0 0 52.0 52.0"><g transform="translate(26.0,26.0)" fill="none" stroke="#3a8bd0" stroke-width="4.5" stroke-linecap="round"><path d="M 0 -21.50 A 21.5 21.5 0 1 1 -21.50 0"/><path d="M 0 -13.30 A 13.3 13.3 0 1 0 13.30 0"/></g><circle cx="26.0" cy="26.0" r="6.7" fill="#55a36c"/></svg><div class="t" style="left:666px;top:545.4px;font-size:35px;transform:scaleX(1.026);transform-origin:0 0;">Poison Centre Notification</div><svg class="a" style="left:3133px;top:543px" width="34" height="34" viewBox="0 0 34 34"><rect x="3" y="3" width="28" height="28" rx="5" fill="none" stroke="#1f1f1f" stroke-width="3.5"/></svg><svg class="a" style="left:3254px;top:543px" width="36" height="34" viewBox="0 0 36 34"><path d="M2 2 L33 32 M33 2 L2 32" stroke="#1f1f1f" stroke-width="3"/></svg><div class="t" style="left:605px;top:666.4px;font-size:35px;">Paziņojuma veids</div><div class="t" style="left:605px;top:755.4px;font-size:35px;transform:scaleX(0.96);transform-origin:0 0;">Paziņotājs</div><div class="t" style="left:605px;top:844.4px;font-size:35px;">Aktīvs tirgus</div><div class="a" style="left:995px;top:644px;width:2300px;height:74px;background:#fff;border:2px solid #e3e3e3;border-bottom:3px solid #9c9c9c;border-radius:11px;box-sizing:border-box"></div><div class="t" style="left:1007.5px;top:666.4px;font-size:35px;">Sākotnējais paziņojums</div><svg class="a" style="left:3245.5px;top:672.5px" width="29" height="17" viewBox="0 0 29 17"><path d="M2 2 L14.5 15 L27 2" fill="none" stroke="#1f1f1f" stroke-width="3.2"/></svg><div class="a" style="left:995px;top:735px;width:2300px;height:73px;background:#fff;border:2px solid #e3e3e3;border-bottom:3px solid #9c9c9c;border-radius:11px;box-sizing:border-box"></div><div class="t" style="left:1007.5px;top:755.4px;font-size:35px;">Trial ltd.</div><svg class="a" style="left:3245.5px;top:763.5px" width="29" height="17" viewBox="0 0 29 17"><path d="M2 2 L14.5 15 L27 2" fill="none" stroke="#1f1f1f" stroke-width="3.2"/></svg><div class="a" style="left:995px;top:822px;width:2300px;height:74px;background:#f9f9f9;border:2px solid #e6e6e6;border-radius:11px;box-sizing:border-box"></div><svg class="a" style="left:1013px;top:837px" width="48" height="36" viewBox="0 0 48 36"><rect x="0" y="0" width="48" height="36" fill="#b8423a"/><rect x="0" y="14" width="48" height="8" fill="#f4f8fc" stroke="#a8c0dc" stroke-width="1"/></svg><div class="t" style="left:1082.5px;top:844.4px;font-size:35px;transform:scaleX(0.964);transform-origin:0 0;">Latvija</div><div class="a" style="left:995px;top:917px;width:47px;height:47px;background:#fff;border:3px solid #cfcfcf;border-radius:9px;box-sizing:border-box"></div><div class="t" style="left:1057.5px;top:925.4px;font-size:35px;">Pievienojiet drošības datu lapu PDF formātā</div><div class="a" style="left:604px;top:985px;width:2691px;height:740px;background:#fff;border:2px solid #d4d4d4;border-radius:11px;box-sizing:border-box;overflow:hidden"></div><div class="a" style="left:606px;top:987px;width:2687px;height:59px;background:#fafafa;border-radius:9px 9px 0 0"></div><div class="a" style="left:606px;top:1045px;width:2687px;height:3px;background:#d9d9d9"></div><div class="t" style="left:642px;top:999.9px;font-size:35px;">Kļūdas un brīdinājumi</div><div class="a" style="left:606px;top:1048px;width:2687px;height:81px;background:#f9f9f9"></div><div class="a" style="left:606px;top:1128px;width:2687px;height:3px;background:#e4e4e4"></div><div class="t" style="left:624.5px;top:1072.9px;font-size:35px;">Tips</div><div class="t" style="left:825px;top:1072.9px;font-size:35px;transform:scaleX(0.946);transform-origin:0 0;">Kods</div><div class="t" style="left:981px;top:1072.9px;font-size:35px;">Drošības datu lapa</div><div class="t" style="left:1646px;top:1072.9px;font-size:35px;">Apraksts</div><div class="t" style="left:2794px;top:1072.9px;font-size:35px;">Vērtība</div><div class="a" style="left:606px;top:1131px;width:2687px;height:76px;background:#edf3fc"></div><div class="a" style="left:606px;top:1207px;width:2687px;height:3px;background:#e6e6e6"></div><svg class="a" style="left:618px;top:1146px" width="46" height="46" viewBox="0 0 46 46"><rect x="8" y="8" width="30" height="30" rx="5" transform="rotate(45 23 23)" fill="#f28c8c" stroke="#b84535" stroke-width="2.5"/></svg><div class="t" style="left:685px;top:1151.4px;font-size:35px;transform:scaleX(0.963);transform-origin:0 0;">Kļūda</div><div class="t" style="left:821px;top:1151.4px;font-size:35px;transform:scaleX(0.913);transform-origin:0 0;">BR530</div><div class="t" style="left:976px;top:1151.4px;font-size:35px;transform:scaleX(0.942);transform-origin:0 0;">PIEMĒRS Bīstams maisījums</div><div class="t" style="left:1641.5px;top:1151.4px;font-size:35px;">9 "Īpašības". iedaļā norādiet krāsu.</div><div class="t" style="left:2791px;top:1151.4px;font-size:35px;transform:scaleX(0.942);transform-origin:0 0;">PIEMĒRS Bīstams maisījums</div><div class="a" style="left:606px;top:1286px;width:2687px;height:3px;background:#e6e6e6"></div><svg class="a" style="left:618px;top:1225px" width="46" height="46" viewBox="0 0 46 46"><rect x="8" y="8" width="30" height="30" rx="5" transform="rotate(45 23 23)" fill="#f28c8c" stroke="#b84535" stroke-width="2.5"/></svg><div class="t" style="left:685px;top:1230.4px;font-size:35px;transform:scaleX(0.963);transform-origin:0 0;">Kļūda</div><div class="t" style="left:821px;top:1230.4px;font-size:35px;transform:scaleX(0.913);transform-origin:0 0;">BR534</div><div class="t" style="left:976px;top:1230.4px;font-size:35px;transform:scaleX(0.942);transform-origin:0 0;">PIEMĒRS Bīstams maisījums</div><div class="t" style="left:1641.5px;top:1230.4px;font-size:35px;">Papildiniet EuPCS (galvenā mērķizmantošana) "Identifikācija". iedaļā.</div><div class="t" style="left:2791px;top:1230.4px;font-size:35px;transform:scaleX(0.942);transform-origin:0 0;">PIEMĒRS Bīstams maisījums</div><div class="a" style="left:804px;top:1048px;width:3px;height:241px;background:#e6e6e6"></div><div class="a" style="left:960px;top:1048px;width:3px;height:241px;background:#e6e6e6"></div><div class="a" style="left:1626px;top:1048px;width:3px;height:241px;background:#e6e6e6"></div><div class="a" style="left:2774px;top:1048px;width:3px;height:241px;background:#e6e6e6"></div><div class="a" style="left:611px;top:1790px;width:391px;height:86px;background:#fff;border:2px solid #d8d8d8;border-bottom:3px solid #cdcdcd;border-radius:11px;box-sizing:border-box"></div><svg class="a" style="left:632px;top:1808px" width="52" height="52" viewBox="0 0 52 52"><g transform="translate(2,2)"><rect x="22" y="8.5" width="25" height="31.5" fill="#fff" stroke="#5ba86e" stroke-width="3"/><g fill="#c8dce4"><rect x="28" y="15" width="14" height="2.5"/><rect x="28" y="21" width="14" height="2.5"/><rect x="28" y="27" width="14" height="2.5"/><rect x="28" y="33" width="14" height="2.5"/></g><path d="M1.5 6 L28 1.5 V46.5 L1.5 42 Z" fill="#c6d6d2" stroke="#5ba86e" stroke-width="3"/><path d="M9.5 15.5 L20 32 M20 15.5 L9.5 32" stroke="#fff" stroke-width="3.5"/></g></svg><div class="t" style="left:793px;top:1821.2px;font-size:34px;transform:scaleX(0.93);transform-origin:0 0;">Excel</div><div class="a" style="left:1028px;top:1790px;width:502px;height:86px;background:#fff;border:2px solid #d8d8d8;border-bottom:3px solid #cdcdcd;border-radius:11px;box-sizing:border-box"></div><svg class="a" style="left:1051px;top:1810px" width="50" height="50" viewBox="0 0 50 50"><g stroke="#b6b6bc" stroke-width="3.5" stroke-linecap="round"><line x1="35.0" y1="24.0" x2="47.5" y2="24.0"/><line x1="31.9" y1="31.4" x2="40.8" y2="40.3"/><line x1="24.5" y1="34.5" x2="24.5" y2="47.0"/><line x1="17.1" y1="31.4" x2="8.2" y2="40.3"/><line x1="14.0" y1="24.0" x2="1.5" y2="24.0"/><line x1="17.1" y1="16.6" x2="8.2" y2="7.7"/><line x1="31.9" y1="16.6" x2="40.8" y2="7.7"/></g><path d="M21.5 4 Q21.5 0.5 24.5 0.5 Q27.5 0.5 27.5 4 L25.8 17 Q24.5 19 23.2 17 Z" fill="#3d3580"/><circle cx="24.5" cy="24" r="2" fill="#3d3580"/></svg><div class="t" style="left:1150px;top:1820.4px;font-size:35px;">PCN dokumentācija</div><div class="a" style="left:2326px;top:1790px;width:547px;height:86px;background:#fff;border:5px solid #2c77ad;border-radius:11px;box-sizing:border-box"></div><svg class="a" style="left:2347px;top:1808px" width="50" height="50" viewBox="0 0 50 50"><circle cx="25" cy="24.5" r="21" fill="#8ab8f0" stroke="#4a7cc0" stroke-width="3"/><rect x="22.5" y="20" width="5" height="15" fill="#fff"/><rect x="19" y="33" width="12" height="3" fill="#fff"/><rect x="19" y="20" width="6" height="3" fill="#fff"/><circle cx="25" cy="14" r="2.8" fill="#fff"/></svg><div class="t" style="left:2450.8px;top:1821.0px;font-size:34.2px;">Paziņot tiešsaistē (S<span style='font-size:24px;vertical-align:-4px'>2</span>S)</div><div class="a" style="left:2898px;top:1790px;width:391px;height:86px;background:#fff;border:2px solid #d8d8d8;border-bottom:3px solid #cdcdcd;border-radius:11px;box-sizing:border-box"></div><svg class="a" style="left:2920px;top:1810px" width="47" height="47" viewBox="0 0 47 47"><path d="M4 4 L43 43 M43 4 L4 43" stroke="#c0463c" stroke-width="9.4"/><path d="M4 4 L43 43 M43 4 L4 43" stroke="#f09090" stroke-width="2.8"/></svg><div class="t" style="left:3073.8px;top:1820.8px;font-size:34.5px;transform:scaleX(1.049);transform-origin:0 0;">Atcelt</div>
</body></html>
